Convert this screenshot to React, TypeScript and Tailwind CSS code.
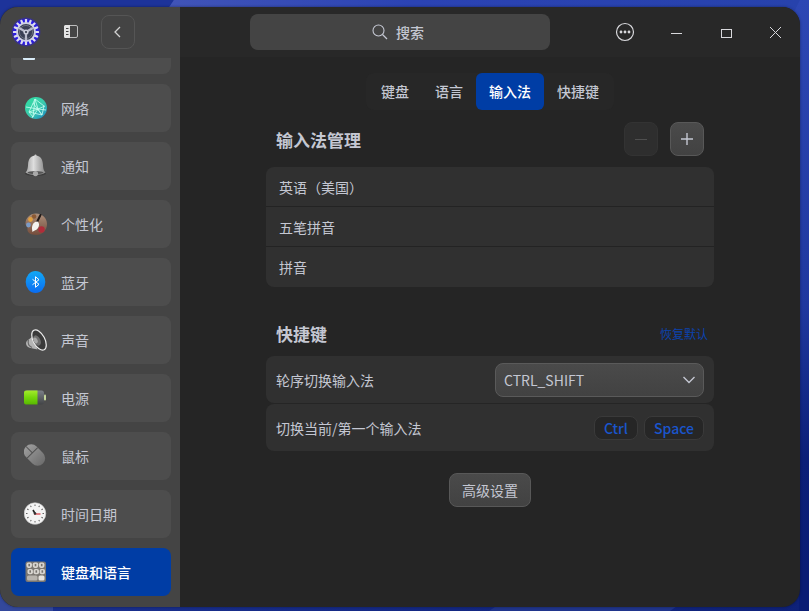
import { useState } from 'react';
import type { ReactNode } from 'react';

function Wallpaper() {
  return (
    <svg className="absolute inset-0 w-full h-full" viewBox="0 0 809 611" preserveAspectRatio="none" aria-hidden="true">
      <defs>
        <linearGradient id="sky" x1="0" y1="0" x2="0" y2="1">
          <stop offset="0" stopColor="#2d47b4" />
          <stop offset=".5" stopColor="#1f389f" />
          <stop offset=".75" stopColor="#0b1f78" />
          <stop offset="1" stopColor="#091c74" />
        </linearGradient>
        <linearGradient id="ridge" x1="0" y1="0" x2="1" y2="0">
          <stop offset="0" stopColor="#4255b8" />
          <stop offset=".4" stopColor="#2b43b4" />
          <stop offset="1" stopColor="#2742ac" />
        </linearGradient>
        <linearGradient id="shore" x1="0" y1="0" x2="1" y2="0">
          <stop offset="0" stopColor="#1b3190" />
          <stop offset="1" stopColor="#0e2179" />
        </linearGradient>
      </defs>
      <rect width="809" height="611" fill="url(#sky)" />
      <path d="M0 0h174l-20 30H0z" fill="#1d339a" />
      <path d="M174 0h626l-15 30H154z" fill="url(#ridge)" />
      <path d="M0 580h809v31H0z" fill="url(#shore)" />
      <path d="M0 580h53v31H0z" fill="#33489c" />
      <path d="M520 590h180l-30 21H489z" fill="#20358c" />
      <path d="M799 570h10v41h-10z" fill="#091c74" />
    </svg>
  );
}

function GearLogo() {
  const teeth = Array.from({ length: 16 }, (_, i) => i * 22.5);
  return (
    <svg width="30" height="30" viewBox="0 0 30 30" fill="none" aria-hidden="true">
      <defs>
        <radialGradient id="logoGlow">
          <stop offset="0" stopColor="#2b2bd0" />
          <stop offset=".8" stopColor="#2a1ae6" />
          <stop offset="1" stopColor="#2a1ae6" stopOpacity="0" />
        </radialGradient>
      </defs>
      <circle cx="15" cy="15" r="15" fill="url(#logoGlow)" />
      {teeth.map((a) => (
        <rect key={a} x="13.9" y="2" width="2.2" height="4" rx=".5" fill="#dcdcee" transform={`rotate(${a} 15 15)`} />
      ))}
      <circle cx="15" cy="15" r="9" fill="#3a3f55" stroke="#cfd0e6" strokeWidth="2" />
      <circle cx="15" cy="15" r="6.6" stroke="#6b7080" strokeWidth="1" />
      <path d="M15 15v8M15 15l-6.800-4M15 15l6.800-4" stroke="#b9bacb" strokeWidth="2.200" />
      <circle cx="15" cy="15" r="2.600" fill="#c9cad9" />
      <circle cx="15" cy="15" r="1.100" fill="#33384a" />
    </svg>
  );
}

function NetworkIcon() {
  return (
    <svg width="24" height="24" viewBox="0 0 24 24" fill="none">
      <defs>
        <linearGradient id="net" x1="0" y1="0" x2="1" y2="1">
          <stop offset="0" stopColor="#2fe0a0" />
          <stop offset=".55" stopColor="#3cc9ae" />
          <stop offset="1" stopColor="#1681c4" />
        </linearGradient>
      </defs>
      <circle cx="12" cy="12" r="11" fill="url(#net)" />
      <path d="M11 3L5 16l13 3M11 3l3 10 7-3M5 16l9-3 4 6M11 3l9 7-2 9M9 7l9 12M2 11l12 2M8 22l6-9M11 3L9 21M14 13l8 1M5 16l4 5" stroke="#c9fff2" strokeWidth=".8" />
    </svg>
  );
}

function BellIcon() {
  return (
    <svg width="24" height="24" viewBox="0 0 24 24" fill="none">
      <defs>
        <linearGradient id="bell" x1="0" y1="0" x2="1" y2="0">
          <stop offset="0" stopColor="#a0a0a0" />
          <stop offset=".4" stopColor="#dedede" />
          <stop offset="1" stopColor="#858585" />
        </linearGradient>
      </defs>
      <ellipse cx="11.500" cy="19.500" rx="10.500" ry="2.600" fill="#3c3c3c" />
      <path d="M10.500 1.500a1 1 0 0 1 2 0c4 .8 6.200 4 6.400 8.500.2 4 .6 6.500 2.600 8.500-4 3-16 3-20 0 2-2 2.400-4.500 2.600-8.500.2-4.500 2.400-7.700 6.400-8.500z" fill="url(#bell)" />
      <ellipse cx="11.500" cy="18.600" rx="8" ry="1.700" fill="#565656" />
      <circle cx="11.500" cy="19.600" r="2.600" fill="#a9a9a9" />
    </svg>
  );
}

function PaletteIcon() {
  return (
    <svg width="24" height="24" viewBox="0 0 24 24" fill="none">
      <defs>
        <linearGradient id="palette" x1="0" y1="0" x2="0" y2="1">
          <stop offset="0" stopColor="#ab8f7b" />
          <stop offset="1" stopColor="#744c3b" />
        </linearGradient>
      </defs>
      <path d="M12 1.500c6 0 11 4.500 11 10.500s-4.500 11-10.500 11c-6.500 0-9.500-3-9-6 .4-2.500-2-3-2-5.500C1.500 6 6 1.500 12 1.500z" fill="url(#palette)" />
      <circle cx="10" cy="4.500" r="2.300" fill="#8b5a35" />
      <circle cx="6.500" cy="7.500" r="2.400" fill="#e0a040" />
      <circle cx="4.500" cy="13" r="2.400" fill="#7b9cc8" />
      <circle cx="17.500" cy="17.500" r="3.200" fill="#b02c3a" />
      <path d="M16.500 3l-3.500 7" stroke="#211a18" strokeWidth="2" strokeLinecap="round" />
      <path d="M13.500 9.500c2 1.500 2 4 .5 6.500-1.500 2.500-4 2-5.500 4-.6-3-1-5.500.5-8 1-1.600 3-2.800 4.500-2.500z" fill="#f4f2ef" />
    </svg>
  );
}

function BluetoothIcon() {
  return (
    <svg width="24" height="24" viewBox="0 0 24 24" fill="none">
      <defs>
        <linearGradient id="bt" x1="0" y1="0" x2="0" y2="1">
          <stop offset="0" stopColor="#12a9f5" />
          <stop offset="1" stopColor="#0a6cf2" />
        </linearGradient>
      </defs>
      <ellipse cx="11.500" cy="12" rx="9.800" ry="11" fill="url(#bt)" />
      <path d="M8.500 9.300l6.500 5-3.500 3V6.700l3.500 3-6.500 5" stroke="#fff" strokeWidth="1" />
    </svg>
  );
}

function SpeakerIcon() {
  return (
    <svg width="24" height="24" viewBox="0 0 24 24" fill="none">
      <path d="M8 9l-4 3C.500 14 2 19.500 6.500 20l7 1.500z" fill="#b5b5b5" />
      <path d="M4.500 12c-1 3 .5 6 3.500 7.500" stroke="#6b6b6b" strokeWidth="1.200" />
      <ellipse cx="15" cy="12" rx="5.800" ry="11" transform="rotate(-28 15 12)" fill="#3a3a3a" stroke="#ededed" strokeWidth="1.200" />
      <ellipse cx="13" cy="12.500" rx="3.400" ry="5.500" transform="rotate(-28 13 12.500)" fill="#6f6f6f" />
      <ellipse cx="11.500" cy="12.500" rx="2" ry="3" transform="rotate(-28 11.500 12.500)" fill="#a8a8a8" />
    </svg>
  );
}

function BatteryIcon() {
  return (
    <svg width="24" height="24" viewBox="0 0 24 24" fill="none">
      <defs>
        <linearGradient id="cell" x1="0" y1="0" x2="0" y2="1">
          <stop offset="0" stopColor="#a4ea2c" />
          <stop offset=".5" stopColor="#74d60c" />
          <stop offset="1" stopColor="#58b800" />
        </linearGradient>
        <linearGradient id="cellEnd" x1="0" y1="0" x2="0" y2="1">
          <stop offset="0" stopColor="#7b8088" />
          <stop offset="1" stopColor="#424446" />
        </linearGradient>
      </defs>
      <rect x="1" y="4.500" width="19" height="14" rx="2.500" fill="url(#cellEnd)" />
      <path d="M2 4.500h11.500v14H2a2 2 0 0 1-2-2v-10a2 2 0 0 1 2-2z" fill="url(#cell)" />
      <rect x="20" y="8.500" width="2" height="6" rx="1" fill="#c4d69c" />
    </svg>
  );
}

function MouseIcon() {
  return (
    <svg width="24" height="24" viewBox="0 0 24 24" fill="none">
      <defs>
        <linearGradient id="mouse" x1="0" y1="0" x2="0" y2="1">
          <stop offset="0" stopColor="#9c9c9c" />
          <stop offset="1" stopColor="#6e6e6e" />
        </linearGradient>
      </defs>
      <g transform="rotate(-45 10.500 11)">
        <rect x="3" y="-1" width="15" height="24" rx="7.500" fill="url(#mouse)" />
        <path d="M3 8h15M10.500-1v9" stroke="#505050" strokeWidth="1" />
      </g>
    </svg>
  );
}

function ClockIcon() {
  const ticks = Array.from({ length: 12 }, (_, i) => i * 30);
  return (
    <svg width="24" height="24" viewBox="0 0 24 24" fill="none">
      <circle cx="11" cy="11.500" r="10.800" fill="#f4f4f4" stroke="#c8c8c8" strokeWidth=".6" />
      {ticks.map((a) => (
        <path key={a} d="M11 2.500v1.500" stroke="#555" strokeWidth=".9" transform={`rotate(${a} 11 11.500)`} />
      ))}
      <path d="M11 11.500L9 8" stroke="#222" strokeWidth="1.600" />
      <path d="M10 12h6.500" stroke="#d9353f" strokeWidth="1.200" />
      <circle cx="11" cy="11.500" r="1.300" fill="#333" />
    </svg>
  );
}

function KeyboardIcon() {
  const keys = [[2.5, 2.5], [8.8, 2.5], [15, 2.5], [3.5, 8.9], [9.6, 8.9], [15.6, 8.9]];
  return (
    <svg width="24" height="24" viewBox="0 0 24 24" fill="none">
      <rect x="1.500" y="1.500" width="20.500" height="20.500" rx="2" fill="#7a7671" />
      {keys.map(([x, y]) => (
        <g key={`${x}-${y}`}>
          <rect x={x} y={y} width="5.400" height="5.400" rx="1.800" fill="#d8d5d0" />
          <rect x={x + 1.9} y={y + 1.4} width="1.600" height="2.400" fill="#77736e" />
        </g>
      ))}
      <rect x="3" y="15.500" width="10.500" height="5" rx="1.600" fill="#b8b4ae" />
      <rect x="14.500" y="15.500" width="6" height="5" rx="1.600" fill="#e6e3de" />
    </svg>
  );
}

function DisplayIcon() {
  return (
    <svg width="24" height="24" viewBox="0 0 24 24" fill="none">
      <rect x="1" y="2" width="22" height="15" rx="2" fill="#8ea3b8" />
      <rect x="0" y="18" width="12" height="4" rx="1" fill="#d9ecf8" />
    </svg>
  );
}

interface NavEntry {
  label: string;
  icon: ReactNode;
}

const navEntries: NavEntry[] = [
  { label: '网络', icon: <NetworkIcon /> },
  { label: '通知', icon: <BellIcon /> },
  { label: '个性化', icon: <PaletteIcon /> },
  { label: '蓝牙', icon: <BluetoothIcon /> },
  { label: '声音', icon: <SpeakerIcon /> },
  { label: '电源', icon: <BatteryIcon /> },
  { label: '鼠标', icon: <MouseIcon /> },
  { label: '时间日期', icon: <ClockIcon /> },
  { label: '键盘和语言', icon: <KeyboardIcon /> },
];

const tabs = ['键盘', '语言', '输入法', '快捷键'];
const methods = ['英语（美国）', '五笔拼音', '拼音'];

function Sidebar() {
  const [active, setActive] = useState('键盘和语言');

  return (
    <aside className="w-[180px] shrink-0 flex flex-col bg-[#444444]">
      <div className="h-[50px] shrink-0 flex items-center pl-[11px]">
        <GearLogo />
        <button aria-label="切换侧边栏" className="ml-[22px] text-[#e4e4e4]">
          <svg width="16" height="16" viewBox="0 0 16 16" fill="none">
            <rect x="1.500" y="1.500" width="13" height="12" rx="1.500" stroke="#bdbdbd" />
            <path d="M2.500 1H7v13H2.500A1.500 1.500 0 0 1 1 12.500v-10A1.500 1.500 0 0 1 2.500 1z" fill="currentColor" />
            <path d="M3 4.500h2.500M3 7.500h2.500M3 10.500h2.500" stroke="#444444" />
          </svg>
        </button>
        <button aria-label="返回" className="ml-[22px] w-[34px] h-[34px] flex items-center justify-center rounded-lg border border-[#555555] text-[#d2d2d2]">
          <svg width="14" height="14" viewBox="0 0 14 14" fill="none">
            <path d="M9 2L4 7l5 5" stroke="currentColor" strokeWidth="1.300" />
          </svg>
        </button>
      </div>
      <nav className="flex-1 min-h-0 mt-px overflow-hidden flex flex-col justify-end gap-[10px] pl-[11px] pr-[9px] pb-[11px]">
        <button aria-label="显示" className="h-12 shrink-0 flex items-center pl-3 rounded-lg bg-[#4d4d4d]">
          <DisplayIcon />
        </button>
        {navEntries.map(({ label, icon }) => (
          <button
            key={label}
            onClick={() => setActive(label)}
            className={`h-12 shrink-0 flex items-center gap-[13px] pl-[13px] rounded-lg text-left ${
              label === active ? 'bg-[#003da5] text-white font-medium' : 'bg-[#4d4d4d] text-[#c4c7d2]'
            }`}
          >
            {icon}
            {label}
          </button>
        ))}
      </nav>
    </aside>
  );
}

function TitleBar() {
  return (
    <header className="h-[50px] shrink-0 flex items-center pl-[70px] bg-[#282828] text-[#d8d8dc]">
      <button className="w-[300px] h-9 flex items-center justify-center gap-2 pr-1 rounded-lg bg-[#444444] text-[#c4c7d2] font-medium">
        <svg width="16" height="16" viewBox="0 0 16 16" fill="none">
          <circle cx="6.500" cy="6.500" r="5.500" stroke="currentColor" strokeWidth="1.100" />
          <path d="M10.500 10.500l4.500 4.500" stroke="currentColor" strokeWidth="1.300" />
        </svg>
        搜索
      </button>
      <div className="ml-auto flex">
        <button aria-label="菜单" className="w-[50px] h-[50px] flex items-center justify-center">
          <svg width="20" height="20" viewBox="0 0 20 20" fill="none">
            <circle cx="10" cy="10" r="8.500" stroke="currentColor" strokeWidth="1.200" />
            <circle cx="6" cy="10" r="1.400" fill="currentColor" />
            <circle cx="10" cy="10" r="1.400" fill="currentColor" />
            <circle cx="14" cy="10" r="1.400" fill="currentColor" />
          </svg>
        </button>
        <button aria-label="最小化" className="w-[50px] h-[50px] flex items-center justify-center">
          <svg width="14" height="14" viewBox="0 0 14 14" fill="none">
            <path d="M3 8.500h11" stroke="currentColor" />
          </svg>
        </button>
        <button aria-label="最大化" className="w-[50px] h-[50px] flex items-center justify-center">
          <svg width="14" height="14" viewBox="0 0 14 14" fill="none">
            <rect x="3.500" y="4.500" width="10" height="8" stroke="currentColor" />
          </svg>
        </button>
        <button aria-label="关闭" className="w-[50px] h-[50px] flex items-center justify-center">
          <svg width="14" height="14" viewBox="0 0 14 14" fill="none">
            <path d="M2 2l11 11M13 2L2 13" stroke="currentColor" />
          </svg>
        </button>
      </div>
    </header>
  );
}

function MethodSection() {
  return (
    <section>
      <div className="h-[34px] flex items-center gap-3 px-[10px]">
        <h2 className="mr-auto pt-[2px] text-[17px] font-bold">输入法管理</h2>
        <button disabled aria-label="删除" className="w-[34px] h-[34px] flex items-center justify-center rounded-lg border border-[#333333] bg-[#2e2e2e] text-[#4f4f4f]">
          <svg width="14" height="14" viewBox="0 0 14 14" fill="none">
            <path d="M1 7.500h12" stroke="currentColor" />
          </svg>
        </button>
        <button aria-label="添加" className="w-[34px] h-[34px] flex items-center justify-center rounded-lg border border-[#585858] bg-linear-to-b from-[#4a4a4a] to-[#424242] text-[#c4c7d2]">
          <svg width="14" height="14" viewBox="0 0 14 14" fill="none">
            <path d="M1 7h12M7 1v12" stroke="currentColor" strokeWidth="1.400" />
          </svg>
        </button>
      </div>
      <ul className="mt-[11px] rounded-lg bg-[#303030] divide-y divide-[#232323]">
        {methods.map((m) => (
          <li key={m} className="h-10 flex items-center px-[13px]">{m}</li>
        ))}
      </ul>
    </section>
  );
}

function ShortcutSection() {
  const kbd = 'h-6 flex items-center px-[9px] rounded-lg border border-[#3a3a3a] bg-[#262626] text-[#1a55cc] font-medium font-[inherit]';

  return (
    <section className="mt-[30px]">
      <div className="h-[34px] flex items-center pl-[10px] pr-[6px]">
        <h2 className="mr-auto text-[17px] font-bold">快捷键</h2>
        <button className="text-xs text-[#0c42ad]">恢复默认</button>
      </div>
      <div className="mt-[5px] flex flex-col gap-px">
        <div className="h-[47px] flex items-center justify-between px-[10px] rounded-lg bg-[#303030]">
          <label htmlFor="cycle">轮序切换输入法</label>
          <div className="relative">
            <select
              id="cycle"
              defaultValue="CTRL_SHIFT"
              className="w-[209px] h-[34px] pl-2 pr-8 appearance-none rounded-lg border border-[#5a5a5a] bg-linear-to-b from-[#4a4a4a] to-[#424242]"
            >
              <option>CTRL_SHIFT</option>
              <option>ALT_SHIFT</option>
            </select>
            <svg className="absolute right-2 top-[10px] pointer-events-none" width="14" height="14" viewBox="0 0 14 14" fill="none">
              <path d="M1.500 4L7 9.500 12.500 4" stroke="currentColor" strokeWidth="1.400" />
            </svg>
          </div>
        </div>
        <div className="h-[47px] flex items-center justify-between px-[10px] rounded-lg bg-[#303030]">
          <span>切换当前/第一个输入法</span>
          <span className="flex gap-[6px]">
            <kbd className={kbd}>Ctrl</kbd>
            <kbd className={kbd}>Space</kbd>
          </span>
        </div>
      </div>
    </section>
  );
}

export default function App() {
  const [tab, setTab] = useState('输入法');

  return (
    <div className="relative h-screen overflow-hidden pt-[7px] pr-[9px] pb-1 font-['Noto_Sans_CJK_SC',sans-serif] text-sm text-[#c4c7d2]">
      <Wallpaper />
      <div className="relative h-full flex overflow-hidden rounded-[18px] bg-[#252525] shadow-[0_0_3px_rgba(0,0,0,0.4)]">
        <Sidebar />
        <div className="flex-1 min-w-0 flex flex-col">
          <TitleBar />
          <main className="flex-1 min-h-0 overflow-hidden flex flex-col items-center pt-4">
            <div role="tablist" className="flex px-[2px] rounded-lg bg-[#272727]">
              {tabs.map((t) => (
                <button
                  key={t}
                  role="tab"
                  aria-selected={t === tab}
                  onClick={() => setTab(t)}
                  className={`h-[37px] px-[13px] pb-[2px] rounded-md font-medium ${t === tab ? 'bg-[#003da5] text-white' : ''}`}
                >
                  {t}
                </button>
              ))}
            </div>
            <div className="w-full max-w-[448px] mt-3">
              <MethodSection />
              <ShortcutSection />
            </div>
            <button className="mt-[22px] h-[34px] px-3 rounded-lg border border-[#585858] bg-linear-to-b from-[#4a4a4a] to-[#424242]">高级设置</button>
          </main>
        </div>
      </div>
    </div>
  );
}
